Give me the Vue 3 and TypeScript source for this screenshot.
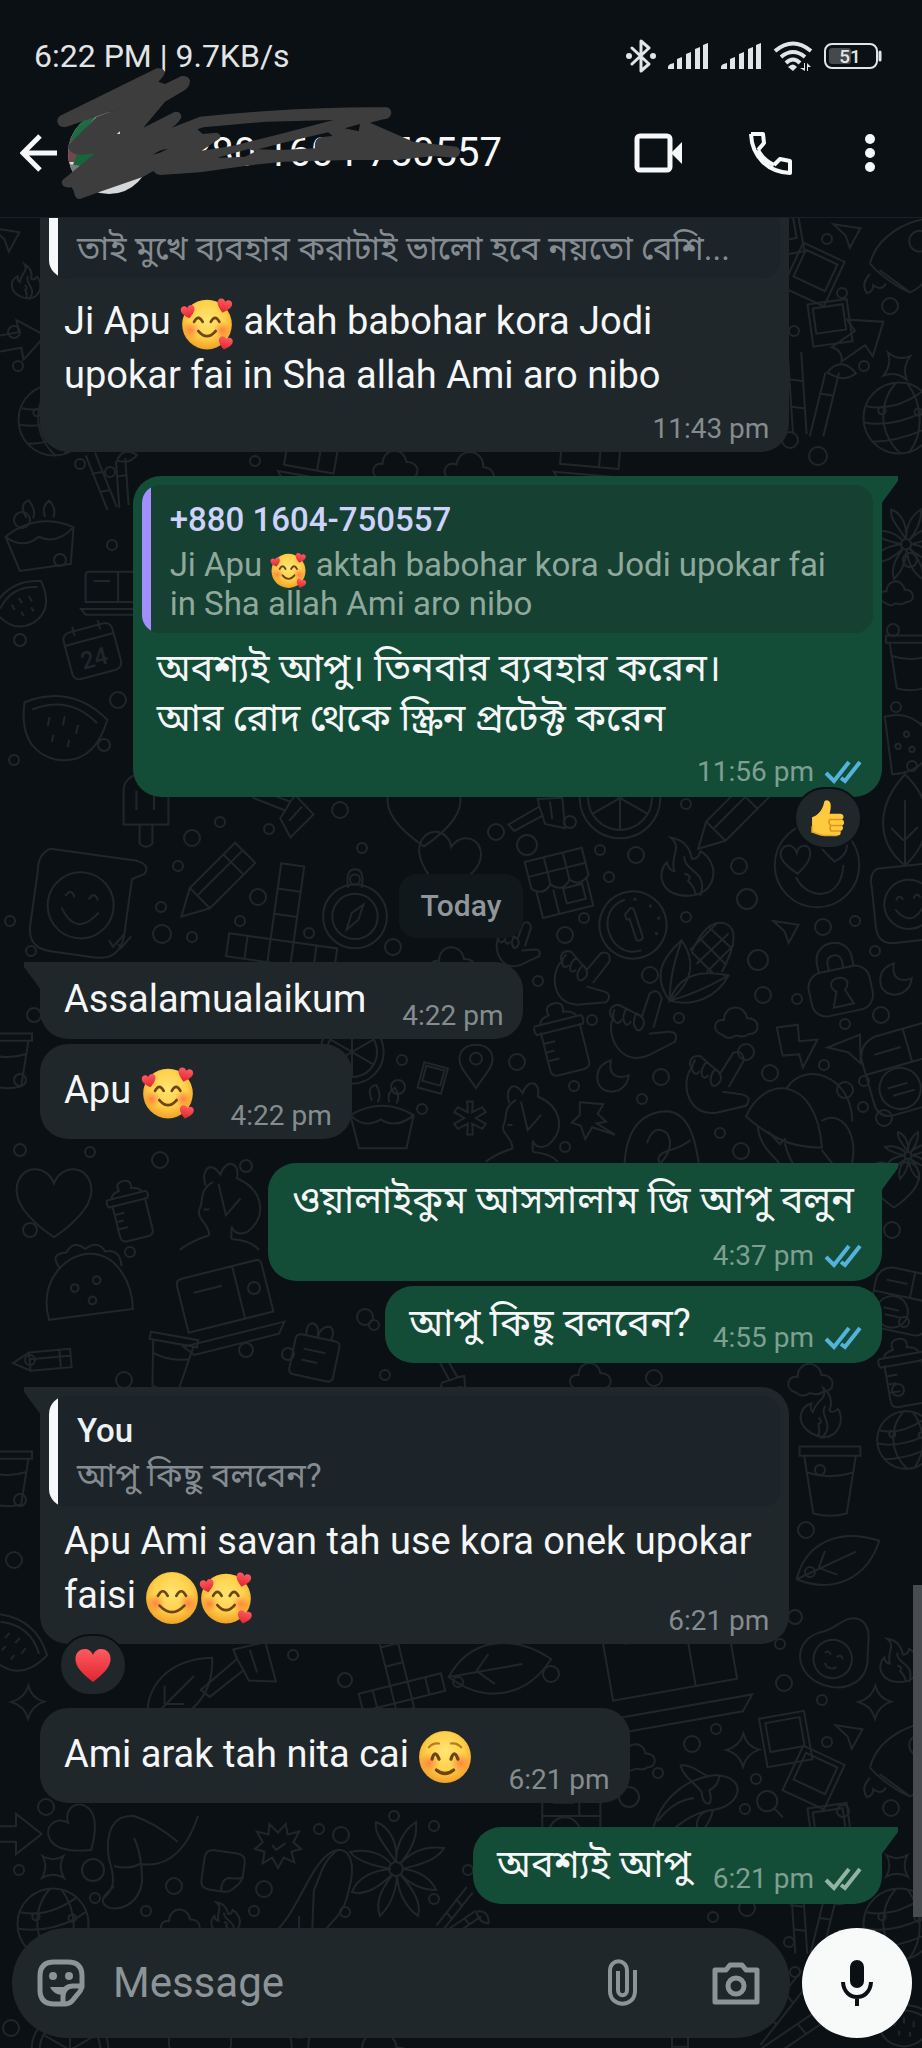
<script setup lang="ts">
type EmojiName = 'hearts' | 'smile' | 'blush' | 'thumb' | 'heart'
interface Part { text?: string; emoji?: EmojiName }
interface Quote { author?: string; parts: Part[]; tone: 'white' | 'violet' }
interface Message {
  id: number
  out?: boolean
  first?: boolean
  wide?: boolean
  stacked?: boolean
  roomy?: boolean
  cut?: boolean
  tuck?: boolean
  bengali?: boolean
  quote?: Quote
  parts: Part[]
  time: string
  ticks?: 'read' | 'delivered'
  reaction?: EmojiName
  day?: string
}

const messages: Message[] = [
  {
    id: 1, wide: true, stacked: true, cut: true,
    quote: { parts: [{ text: 'তাই মুখে ব্যবহার করাটাই ভালো হবে নয়তো বেশি...' }], tone: 'white' },
    parts: [{ text: 'Ji Apu ' }, { emoji: 'hearts' }, { text: ' aktah babohar kora Jodi ' }, { text: 'upokar fai in Sha allah Ami aro nibo' }],
    time: '11:43 pm',
  },
  {
    id: 2, out: true, first: true, wide: true, stacked: true, bengali: true,
    quote: {
      author: '+880 1604-750557', tone: 'violet',
      parts: [{ text: 'Ji Apu ' }, { emoji: 'hearts' }, { text: ' aktah babohar kora Jodi upokar fai ' }, { text: 'in Sha allah Ami aro nibo' }],
    },
    parts: [{ text: 'অবশ্যই আপু। তিনবার ব্যবহার করেন।\nআর রোদ থেকে স্ক্রিন প্রটেক্ট করেন' }],
    time: '11:56 pm', ticks: 'read', reaction: 'thumb',
  },
  { id: 3, day: 'Today', first: true, parts: [{ text: 'Assalamualaikum' }], time: '4:22 pm' },
  { id: 4, roomy: true, parts: [{ text: 'Apu ' }, { emoji: 'hearts' }], time: '4:22 pm' },
  {
    id: 5, out: true, first: true, stacked: true, bengali: true,
    parts: [{ text: 'ওয়ালাইকুম আসসালাম জি আপু বলুন' }], time: '4:37 pm', ticks: 'read',
  },
  { id: 6, out: true, bengali: true, parts: [{ text: 'আপু কিছু বলবেন?' }], time: '4:55 pm', ticks: 'read' },
  {
    id: 7, first: true, wide: true, stacked: true, tuck: true,
    quote: { author: 'You', parts: [{ text: 'আপু কিছু বলবেন?' }], tone: 'white' },
    parts: [{ text: 'Apu Ami savan tah use kora onek upokar ' }, { text: 'faisi ' }, { emoji: 'smile' }, { emoji: 'hearts' }],
    time: '6:21 pm', reaction: 'heart',
  },
  { id: 8, roomy: true, parts: [{ text: 'Ami arak tah nita cai ' }, { emoji: 'blush' }], time: '6:21 pm' },
  { id: 9, out: true, first: true, bengali: true, parts: [{ text: 'অবশ্যই আপু' }], time: '6:21 pm', ticks: 'delivered' },
]

const emojiLabels: Record<EmojiName, string> = {
  hearts: 'Smiling face with hearts',
  smile: 'Smiling face with smiling eyes',
  blush: 'Smiling face',
  thumb: 'Thumbs up',
  heart: 'Red heart',
}

// Small rings scattered between the wallpaper drawings: x, y, radius.
const rings: number[][] = [
  [527, 845, 10], [600, 850, 5], [636, 855, 8], [609, 877, 5], [739, 866, 8], [747, 899, 10], [584, 918, 5],
  [565, 935, 8], [686, 917, 5], [823, 927, 8], [855, 921, 5], [758, 960, 10], [875, 951, 5], [650, 975, 8],
  [538, 981, 5], [763, 995, 8], [797, 999, 5], [881, 1015, 8], [679, 1018, 5], [592, 1020, 5], [845, 1024, 5],
  [746, 1052, 8], [824, 1065, 5], [661, 1077, 8], [770, 1073, 8], [864, 1081, 5], [845, 1090, 8], [642, 1099, 5],
  [574, 1086, 5], [863, 1107, 5], [884, 1118, 8], [720, 1133, 5], [741, 1151, 8], [565, 1147, 5],
  [827, 239, 5], [890, 306, 8], [794, 331, 5], [842, 293, 5], [864, 366, 5], [790, 440, 8], [818, 456, 9], [14, 332, 6],
  [18, 366, 5], [80, 464, 5], [255, 461, 5], [110, 472, 5], [22, 520, 8], [60, 560, 6], [112, 545, 5], [20, 640, 6],
  [118, 700, 8], [104, 745, 6], [14, 760, 5], [893, 630, 6], [896, 707, 5], [910, 560, 7], [912, 766, 5],
  [220, 822, 5], [269, 829, 5], [192, 838, 8], [340, 810, 8], [496, 832, 8], [570, 822, 6], [686, 804, 5], [362, 848, 5],
  [178, 866, 5], [258, 897, 8], [161, 907, 5], [240, 921, 5], [162, 934, 9], [192, 937, 5], [10, 921, 5], [31, 951, 5],
  [309, 933, 5], [393, 947, 8], [34, 1015, 7], [20, 1080, 6], [402, 1060, 5], [398, 1087, 7], [422, 1109, 5], [517, 1062, 8],
  [20, 1150, 6], [90, 1152, 5], [160, 1160, 8], [246, 1166, 6], [30, 1230, 7], [130, 1252, 5], [254, 1288, 6], [288, 1354, 6],
  [365, 1317, 8], [374, 1325, 5], [246, 1350, 7], [385, 1375, 5], [124, 1380, 8], [30, 1360, 5], [892, 1230, 8], [904, 1322, 5],
  [654, 1378, 8], [810, 1572, 5], [795, 1617, 7], [806, 1530, 8], [820, 1470, 5], [898, 1390, 6], [20, 1500, 6], [14, 1560, 8],
  [293, 1655, 5], [345, 1680, 7], [458, 1682, 5], [551, 1674, 8], [780, 1644, 5], [784, 1683, 8], [822, 1700, 5], [716, 1729, 5],
  [692, 1744, 8], [658, 1773, 5], [756, 1779, 5], [629, 1797, 10], [745, 1809, 5], [827, 1742, 5], [843, 1811, 6], [891, 1808, 8],
  [46, 1807, 8], [319, 1829, 5], [341, 1835, 8], [394, 1816, 5], [434, 1826, 5], [468, 1870, 5], [434, 1899, 5], [93, 1870, 11],
  [174, 1886, 8], [264, 1889, 8], [345, 1912, 5], [254, 1911, 5], [146, 1911, 5], [95, 1898, 5], [19, 1870, 5], [11, 2028, 8],
  [713, 1917, 5], [747, 1908, 8], [789, 1942, 5], [795, 1972, 5],
]

// Wallpaper drawings: symbol, centre x, centre y, size, rotation.
interface Doodle { kind: string; x: number; y: number; size: number; turn: number }
const doodles: Doodle[] = [
  { kind: 'arrowhead', x: 847, y: 236, size: 28, turn: 0 },
  { kind: 'photo', x: 780, y: 230, size: 60, turn: -10 },
  { kind: 'photo', x: 816, y: 275, size: 60, turn: 25 },
  { kind: 'photo', x: 832, y: 322, size: 52, turn: -8 },
  { kind: 'rocket', x: 902, y: 254, size: 80, turn: 0 },
  { kind: 'arrow', x: 860, y: 338, size: 62, turn: -35 },
  { kind: 'star', x: 897, y: 366, size: 28, turn: 10 },
  { kind: 'bamboo', x: 812, y: 396, size: 84, turn: 8 },
  { kind: 'globe', x: 899, y: 418, size: 74, turn: 0 },
  { kind: 'arrow', x: 20, y: 340, size: 56, turn: -10 },
  { kind: 'arrowhead', x: 6, y: 240, size: 28, turn: 0 },
  { kind: 'flame', x: 28, y: 282, size: 34, turn: 20 },
  { kind: 'globe', x: 54, y: 420, size: 74, turn: 0 },
  { kind: 'bamboo', x: 112, y: 480, size: 60, turn: -10 },
  { kind: 'cake', x: 40, y: 535, size: 78, turn: -8 },
  { kind: 'laptop', x: 310, y: 462, size: 60, turn: 10 },
  { kind: 'laptop', x: 590, y: 458, size: 70, turn: 5 },
  { kind: 'cloud', x: 395, y: 465, size: 48, turn: 0 },
  { kind: 'cloud', x: 470, y: 468, size: 54, turn: 10 },
  { kind: 'calendar', x: 92, y: 650, size: 60, turn: -15 },
  { kind: 'melon', x: 64, y: 720, size: 92, turn: 12 },
  { kind: 'melon', x: 20, y: 600, size: 60, turn: -30 },
  { kind: 'laptop', x: 110, y: 595, size: 58, turn: 0 },
  { kind: 'flower', x: 906, y: 545, size: 74, turn: 0 },
  { kind: 'cloud', x: 896, y: 592, size: 36, turn: 0 },
  { kind: 'cup', x: 910, y: 662, size: 60, turn: 0 },
  { kind: 'taco', x: 908, y: 742, size: 66, turn: 80 },
  { kind: 'popsicle', x: 146, y: 810, size: 80, turn: 0 },
  { kind: 'brush', x: 284, y: 808, size: 64, turn: 0 },
  { kind: 'heart', x: 424, y: 812, size: 82, turn: 0 },
  { kind: 'brush', x: 540, y: 815, size: 60, turn: -50 },
  { kind: 'wheel', x: 620, y: 798, size: 84, turn: 0 },
  { kind: 'pencil', x: 735, y: 812, size: 80, turn: 0 },
  { kind: 'leaf', x: 905, y: 820, size: 70, turn: -45 },
  { kind: 'chocolate', x: 560, y: 882, size: 70, turn: -14 },
  { kind: 'flame', x: 688, y: 866, size: 62, turn: 0 },
  { kind: 'lovesmile', x: 817, y: 865, size: 88, turn: 0 },
  { kind: 'bubblesmile', x: 914, y: 902, size: 88, turn: -6 },
  { kind: 'clock', x: 633, y: 925, size: 70, turn: -18 },
  { kind: 'corn', x: 700, y: 962, size: 84, turn: 0 },
  { kind: 'arrowhead', x: 786, y: 932, size: 26, turn: 0 },
  { kind: 'lock', x: 838, y: 978, size: 74, turn: -12 },
  { kind: 'moon', x: 896, y: 979, size: 34, turn: 0 },
  { kind: 'hand', x: 582, y: 977, size: 60, turn: 0 },
  { kind: 'hand', x: 640, y: 1026, size: 66, turn: -22 },
  { kind: 'hand', x: 716, y: 1082, size: 66, turn: -8 },
  { kind: 'bottle', x: 562, y: 1038, size: 74, turn: -14 },
  { kind: 'cloud', x: 736, y: 1021, size: 46, turn: 0 },
  { kind: 'bolt', x: 798, y: 1046, size: 46, turn: -8 },
  { kind: 'arrowhead', x: 850, y: 1052, size: 36, turn: -30 },
  { kind: 'jar', x: 902, y: 1070, size: 86, turn: -16 },
  { kind: 'moon', x: 613, y: 1076, size: 34, turn: 0 },
  { kind: 'pin', x: 592, y: 1120, size: 44, turn: -15 },
  { kind: 'girl', x: 526, y: 1120, size: 84, turn: 0 },
  { kind: 'bread', x: 662, y: 1150, size: 84, turn: 0 },
  { kind: 'mushroom', x: 800, y: 1130, size: 116, turn: 14 },
  { kind: 'flower', x: 908, y: 1156, size: 50, turn: 0 },
  { kind: 'pinmark', x: 476, y: 1066, size: 46, turn: 0 },
  { kind: 'photo', x: 434, y: 1078, size: 32, turn: 15 },
  { kind: 'asterisk', x: 470, y: 1118, size: 36, turn: 0 },
  { kind: 'cake', x: 382, y: 1118, size: 72, turn: 0 },
  { kind: 'wheel', x: 352, y: 1052, size: 66, turn: 0 },
  { kind: 'compass', x: 355, y: 908, size: 84, turn: 0 },
  { kind: 'tiles', x: 285, y: 920, size: 116, turn: 8 },
  { kind: 'pencil', x: 220, y: 878, size: 84, turn: 0 },
  { kind: 'bubblesmile', x: 88, y: 904, size: 118, turn: 8 },
  { kind: 'heart', x: 448, y: 862, size: 70, turn: 12 },
  { kind: 'hand', x: 516, y: 945, size: 44, turn: -20 },
  { kind: 'cloud', x: 452, y: 962, size: 50, turn: 0 },
  { kind: 'heart', x: 54, y: 1202, size: 84, turn: 0 },
  { kind: 'cup', x: 8, y: 1060, size: 60, turn: 0 },
  { kind: 'bottle', x: 130, y: 1210, size: 62, turn: -14 },
  { kind: 'girl', x: 224, y: 1204, size: 92, turn: 0 },
  { kind: 'taco', x: 86, y: 1286, size: 96, turn: -10 },
  { kind: 'gift', x: 316, y: 1350, size: 62, turn: 12 },
  { kind: 'laptop', x: 228, y: 1310, size: 104, turn: -14 },
  { kind: 'cup', x: 170, y: 1362, size: 60, turn: 10 },
  { kind: 'pencil', x: 48, y: 1360, size: 54, turn: 40 },
  { kind: 'heart', x: 894, y: 1184, size: 56, turn: 0 },
  { kind: 'jar', x: 900, y: 1300, size: 66, turn: 12 },
  { kind: 'bottle', x: 904, y: 1372, size: 70, turn: -10 },
  { kind: 'cloud', x: 810, y: 1378, size: 48, turn: 0 },
  { kind: 'brush', x: 450, y: 1378, size: 54, turn: 40 },
  { kind: 'cloud', x: 590, y: 1376, size: 44, turn: 0 },
  { kind: 'flame', x: 824, y: 1414, size: 48, turn: 30 },
  { kind: 'cup', x: 830, y: 1480, size: 76, turn: 0 },
  { kind: 'globe', x: 906, y: 1440, size: 60, turn: 0 },
  { kind: 'avocado', x: 836, y: 1650, size: 80, turn: 20 },
  { kind: 'leaf', x: 838, y: 1560, size: 70, turn: 20 },
  { kind: 'flame', x: 900, y: 1660, size: 46, turn: 0 },
  { kind: 'melon', x: 18, y: 1640, size: 70, turn: 40 },
  { kind: 'cup', x: 8, y: 1478, size: 60, turn: 0 },
  { kind: 'leaf', x: 180, y: 1690, size: 70, turn: 0 },
  { kind: 'brush', x: 240, y: 1670, size: 80, turn: -60 },
  { kind: 'tiles', x: 395, y: 1668, size: 90, turn: -14 },
  { kind: 'leaf', x: 500, y: 1668, size: 80, turn: 35 },
  { kind: 'laptop', x: 672, y: 1672, size: 150, turn: -10 },
  { kind: 'star', x: 28, y: 1702, size: 28, turn: 45 },
  { kind: 'star', x: 875, y: 1702, size: 28, turn: 45 },
  { kind: 'star', x: 743, y: 1750, size: 28, turn: 45 },
  { kind: 'photo', x: 788, y: 1738, size: 60, turn: -10 },
  { kind: 'photo', x: 816, y: 1778, size: 60, turn: 25 },
  { kind: 'photo', x: 832, y: 1826, size: 52, turn: -8 },
  { kind: 'arrowhead', x: 849, y: 1737, size: 28, turn: 0 },
  { kind: 'rocket', x: 902, y: 1758, size: 80, turn: 0 },
  { kind: 'whale', x: 694, y: 1800, size: 96, turn: 0 },
  { kind: 'magnifier', x: 770, y: 1804, size: 28, turn: 0 },
  { kind: 'cloud', x: 636, y: 1756, size: 40, turn: 0 },
  { kind: 'jar', x: 570, y: 1820, size: 66, turn: 0 },
  { kind: 'star', x: 897, y: 1866, size: 26, turn: 0 },
  { kind: 'globe', x: 899, y: 1924, size: 74, turn: 0 },
  { kind: 'bamboo', x: 812, y: 1920, size: 74, turn: 8 },
  { kind: 'bamboo', x: 790, y: 2020, size: 84, turn: 50 },
  { kind: 'arrow', x: 16, y: 1834, size: 56, turn: 0 },
  { kind: 'heart', x: 76, y: 1832, size: 56, turn: -40 },
  { kind: 'star', x: 53, y: 1867, size: 26, turn: 0 },
  { kind: 'sock', x: 150, y: 1862, size: 100, turn: 0 },
  { kind: 'burst', x: 278, y: 1846, size: 48, turn: 0 },
  { kind: 'sticker', x: 223, y: 1872, size: 44, turn: 8 },
  { kind: 'spoon', x: 312, y: 1892, size: 92, turn: 0 },
  { kind: 'flower', x: 396, y: 1870, size: 100, turn: 0 },
  { kind: 'flame', x: 226, y: 1918, size: 34, turn: 0 },
  { kind: 'cloud', x: 180, y: 1922, size: 42, turn: 0 },
  { kind: 'globe', x: 53, y: 1924, size: 74, turn: 0 },
  { kind: 'bamboo', x: 460, y: 1916, size: 50, turn: 50 },
  { kind: 'wheel', x: 70, y: 2050, size: 80, turn: 0 },
  { kind: 'heart', x: 200, y: 2052, size: 70, turn: 0 },
  { kind: 'cloud', x: 380, y: 2052, size: 70, turn: 0 },
  { kind: 'star', x: 300, y: 2046, size: 28, turn: 0 },
  { kind: 'tiles', x: 680, y: 2050, size: 80, turn: 0 },
  { kind: 'melon', x: 904, y: 2020, size: 60, turn: 0 },
]

const place = (d: Doodle): string =>
  `translate(${d.x} ${d.y}) rotate(${d.turn}) scale(${d.size / 100}) translate(-50 -50)`
</script>

<template>
  <div class="screen">
    <svg class="defs" aria-hidden="true">
      <defs>
        <radialGradient id="face" cx="50%" cy="40%" r="60%">
          <stop offset="0" stop-color="#ffe573" /><stop offset=".6" stop-color="#ffd04a" /><stop offset="1" stop-color="#f2a126" />
        </radialGradient>
        <radialGradient id="cheek"><stop offset="0" stop-color="#ff6a3c" stop-opacity=".75" /><stop offset="1" stop-color="#ff7a3c" stop-opacity="0" /></radialGradient>
        <linearGradient id="red" x1="0" y1="0" x2="0" y2="1"><stop offset="0" stop-color="#ff5a60" /><stop offset="1" stop-color="#e0242f" /></linearGradient>
        <symbol id="small-heart" viewBox="0 0 20 20"><path d="M10 18.500C3 13 .8 9.500 1.600 5.800 2.500 2 8 1.200 10 5.500 12 1.200 17.500 2 18.400 5.800 19.200 9.500 17 13 10 18.500Z" fill="url(#red)" /></symbol>
        <symbol id="emoji-hearts" viewBox="0 0 100 100">
          <circle cx="50" cy="51" r="46" fill="url(#face)" />
          <circle cx="20" cy="61" r="16" fill="url(#cheek)" /><circle cx="78" cy="61" r="16" fill="url(#cheek)" />
          <path d="M26 46q8-15 16 0M57 46q8-15 16 0" fill="none" stroke="#6d4414" stroke-width="5" stroke-linecap="round" />
          <path d="M34 63q16 19 32 0" fill="none" stroke="#6d4414" stroke-width="5" stroke-linecap="round" />
          <use href="#small-heart" x="0" y="12" width="30" height="30" transform="rotate(-12 15 27)" />
          <use href="#small-heart" x="66" y="0" width="32" height="32" transform="rotate(14 82 16)" />
          <use href="#small-heart" x="69" y="70" width="30" height="30" transform="rotate(14 84 85)" />
        </symbol>
        <symbol id="emoji-smile" viewBox="0 0 100 100">
          <circle cx="50" cy="50" r="48" fill="url(#face)" />
          <circle cx="20" cy="60" r="18" fill="url(#cheek)" /><circle cx="80" cy="60" r="18" fill="url(#cheek)" />
          <path d="M24 46q9-17 18 0M58 46q9-17 18 0M27 64q23 24 46 0" fill="none" stroke="#6d4414" stroke-width="5" stroke-linecap="round" />
        </symbol>
        <symbol id="emoji-blush" viewBox="0 0 100 100">
          <circle cx="50" cy="50" r="48" fill="url(#face)" />
          <circle cx="21" cy="61" r="19" fill="url(#cheek)" /><circle cx="79" cy="61" r="19" fill="url(#cheek)" />
          <path d="M20 32q8-9 19-7M61 25q11-2 19 7" fill="none" stroke="#b97b1d" stroke-width="4" stroke-linecap="round" />
          <path d="M26 54q5-20 13 0M61 54q6-20 13 0M34 74q16 13 32 0" fill="none" stroke="#6d4414" stroke-width="6" stroke-linecap="round" />
        </symbol>
        <symbol id="emoji-thumb" viewBox="0 0 100 100">
          <path d="M8 48C22 45 36 30 40 8 41 1 55 0 57 14 58 24 56 32 54 39H82C92 39 94 51 86 54 95 56 94 69 86 70 92 73 90 84 82 84 86 90 82 96 74 96H42C26 96 18 88 8 87Z" fill="#ffca3d" />
          <path d="M55 54H86M57 70H86M58 84H82M55 54q-6 8 2 16-4 8 1 14" fill="none" stroke="#dd941d" stroke-width="4" stroke-linecap="round" />
          <path d="M8 72V87C18 88 26 96 42 96H74" fill="none" stroke="#e9a526" stroke-width="4" />
        </symbol>
        <symbol id="emoji-heart" viewBox="0 0 100 100"><path d="M50 95C18 70 2 52 4 31 6 6 40-2 50 24 60-2 94 6 96 31 98 52 82 70 50 95Z" fill="url(#red)" /></symbol>

        <g id="d-arrowhead"><path d="M2 8 98 22 60 92 45 48Z" /></g>
        <g id="d-photo"><path d="M8 10H84V92H8ZM17 19H75V68H17Z" /></g>
        <g id="d-rocket"><path d="M10 62C18 30 52 6 98 4M10 62C20 74 44 92 60 98 76 92 92 70 98 50M22 70 60 98" /><circle cx="72" cy="34" r="13" /><path d="M10 75q-12 12-4 24 8-2 8-10 10 8 16-2" /></g>
        <g id="d-arrow"><path d="M4 36H50V14L96 50 50 86V64H4Q16 50 4 36Z" /></g>
        <g id="d-star"><path d="M10 8Q50 32 90 8 68 50 92 92 50 68 8 92 32 50 10 8Z" /></g>
        <g id="d-bamboo"><path d="M14 2 34 98M30 0 50 96M18 34H38M26 66H44M62 20 54 98M78 18 70 96M60 46H76M64 20C74 2 88 6 98 16 86 28 76 24 64 20" /></g>
        <g id="d-globe"><circle cx="50" cy="50" r="48" /><path d="M46 2C22 30 22 70 52 98M62 4C82 32 84 70 64 96M6 34C34 40 60 30 82 14M2 56C34 62 70 52 94 34M14 82C44 82 72 72 96 60" /><circle cx="27" cy="40" r="5" /><circle cx="76" cy="42" r="5" /></g>
        <g id="d-flame"><path d="M22 4C48 8 54 26 56 38 66 40 68 32 70 26 104 46 96 98 50 98 6 98-2 62 16 44 18 54 24 58 28 58 20 34 42 20 22 4ZM44 34C42 60 84 56 70 98M44 62q14 4 6 12 12 12 12 22" /></g>
        <g id="d-cake"><path d="M6 46Q50 20 94 46L84 92H18ZM6 46Q26 66 48 52 70 66 94 46M36 26q-8-20 6-22 8 14 2 24M60 28q-4-14 8-20 8 12 2 22" /></g>
        <g id="d-laptop"><path d="M14 10H88Q92 10 92 16V62H8V16Q8 10 14 10ZM0 74H100L92 84H8ZM22 26H50M64 10V62" /></g>
        <g id="d-cloud"><path d="M20 80C-4 72 2 44 24 48 24 14 68 10 74 44 104 42 104 80 78 78 66 90 54 80 48 82 38 90 26 86 20 80Z" /></g>
        <g id="d-calendar"><rect x="8" y="12" width="84" height="80" rx="12" /><path d="M8 32H92M28 4V20M72 4V20" /><text x="50" y="78" text-anchor="middle">24</text></g>
        <g id="d-melon"><path d="M4 40Q50 10 96 40 92 92 50 94 8 92 4 40ZM14 46Q50 22 86 46M34 50v10M50 46v10M66 52v10M42 68v8M60 70v8" /></g>
        <g id="d-flower"><path d="M50 42C38 24 28 14 30 2 46 8 52 26 50 42C50 24 58 10 70 2 72 20 62 34 54 44C68 28 84 26 98 28 90 42 68 46 56 49C74 50 86 60 90 70 72 70 60 60 54 54C66 68 76 82 72 96 58 86 52 70 51 56C50 74 42 88 34 96 28 80 38 66 47 54C34 66 20 76 6 72 12 56 30 50 45 49C30 46 12 42 4 32 22 28 38 34 46 45" /><circle cx="50" cy="49" r="7" /></g>
        <g id="d-cup"><path d="M16 18H84L72 94Q50 100 28 94ZM10 6H90V18H10ZM20 40Q50 50 80 40" /></g>
        <g id="d-taco"><path d="M6 78C2 34 38 12 62 18 88 24 98 56 94 82ZM26 26q-8-16 10-14 10-12 20 0 14-8 20 6 16 0 14 18" /><circle cx="38" cy="50" r="4" /><circle cx="62" cy="46" r="4" /><circle cx="54" cy="66" r="4" /></g>
        <g id="d-popsicle"><path d="M22 68V26C22-4 78-4 78 26V68ZM42 68V92Q50 100 58 92V68M38 26V50M60 26V50" /></g>
        <g id="d-brush"><path d="M4 20 60 40 68 30 96 60 60 96 44 66 52 54 2 34ZM60 40 52 54M78 48 58 70" /></g>
        <g id="d-heart"><path d="M50 92C18 70 2 50 6 30 12 4 42 6 50 28 58 6 88 4 94 30 98 50 82 70 50 92Z" /></g>
        <g id="d-wheel"><circle cx="50" cy="50" r="48" /><circle cx="50" cy="50" r="38" /><path d="M50 12V88M17 31 83 69M17 69 83 31" /></g>
        <g id="d-pencil"><path d="M4 96 14 62 68 8 92 32 38 86ZM14 62 38 86M54 22 78 46M24 70 76 18" /></g>
        <g id="d-leaf"><path d="M4 96C-2 44 34 6 96 4 98 60 62 98 4 96ZM4 96 70 30M28 70V44M30 70H56" /></g>
        <g id="d-chocolate"><path d="M8 10H92V50Q76 64 64 50 50 66 36 50 22 64 8 50ZM8 32H92M36 10V50M64 10V50M14 56V94H88V54M38 58V94M52 60h28v22H52Z" /></g>
        <g id="d-lovesmile"><circle cx="50" cy="50" r="48" /><path d="M28 60C10 48 4 38 12 30 20 24 26 32 27 36 30 26 40 26 42 34 44 44 36 52 28 60ZM70 46C56 34 48 24 58 18 66 14 70 22 71 26 76 18 84 20 84 28 84 36 78 42 70 46ZM26 64C40 92 78 90 80 50" /></g>
        <g id="d-bubblesmile"><path d="M12 8H86Q98 10 94 18L84 24V74Q82 94 62 94H24Q4 94 4 74V28Q2 14 12 8Z" /><circle cx="44" cy="52" r="28" /><path d="M30 46q4-8 8 0M50 46q4-8 8 0M28 56q16 24 32 0M72 78l4 5 8-12M80 80l3 3 7-11" /></g>
        <g id="d-clock"><circle cx="50" cy="50" r="48" /><path d="M50 12C2 12 2 88 50 88M44 32 54 26Q58 26 58 30V72Q52 76 48 72V40Q42 42 44 32Z" /><circle cx="64" cy="16" r="1" /><circle cx="82" cy="32" r="1" /><circle cx="88" cy="52" r="1" /><circle cx="78" cy="72" r="1" /></g>
        <g id="d-corn"><path d="M14 96C-8 66 6 44 28 24 42 44 46 70 14 96C26 62 54 60 84 66 70 92 42 104 14 96ZM14 96C14 66 20 50 28 24M14 96Q46 88 84 66M40 38C52 12 64 0 80 4 94 10 94 28 76 62M40 38 66 64M50 22 80 52M60 8 88 34M84 16 46 52M70 4 38 36M90 30 58 62" /></g>
        <g id="d-lock"><rect x="8" y="38" width="84" height="60" rx="20" /><path d="M26 38V26C26-6 74-6 74 26V38M40 38V28C40 16 60 16 60 28V38M44 68 36 88H64L56 68C66 58 60 50 50 50 40 50 34 58 44 68Z" /></g>
        <g id="d-moon"><path d="M44 4C36 42 56 62 96 48 90 112-2 112 4 48 6 26 22 10 44 4Z" /></g>
        <g id="d-hand"><path d="M68 60 96 24Q98 6 82 10L58 38 32 8C20 4 12 12 16 24-4 44 0 98 46 96L90 92Q102 80 86 74L58 66M24 12C10 26 20 40 28 30M40 18C24 32 30 48 40 38M52 30C36 44 42 64 54 52 62 46 58 36 52 30" /></g>
        <g id="d-bottle"><path d="M24 36V88Q24 98 34 98H68Q78 98 78 88V36M18 26H82Q86 32 82 38H18Q14 32 18 26ZM26 26Q26 18 40 16 36 2 50 2 64 2 60 16 74 18 76 26M24 52H40M24 64H36M24 76H40" /></g>
        <g id="d-bolt"><path d="M10 4H56L54 40 94 42 54 98 50 68 14 66Z" /></g>
        <g id="d-jar"><path d="M30 4H86Q98 6 96 20V86Q94 98 80 98H28Q8 98 8 78V26Q10 8 30 4ZM8 44H96M24 24H56M64 4V44" /><circle cx="42" cy="70" r="24" /><path d="M28 66H52M32 76H58" /></g>
        <g id="d-pin"><path d="M34 4 84 22 66 40 80 62 58 60 92 96 46 66 24 88 22 56 4 44 26 32Z" /></g>
        <g id="d-girl"><path d="M30 30C24 12 36 2 46 18 52 0 68 4 64 22 92 34 98 62 76 80 68 84 60 82 58 74M38 26C22 36 28 46 24 54 18 66 34 70 34 84M58 76V88M34 84C14 90 4 98 2 100M58 88C82 90 86 98 88 100M44 28 52 62 68 44M28 56H34" /></g>
        <g id="d-bread"><path d="M6 98C0 30 22 6 54 4 84 4 92 40 98 98M32 42Q40 18 56 30 66 46 48 66 40 56 60 50 74 46 84 38" /></g>
        <g id="d-mushroom"><path d="M2 50C8 12 52 0 72 60 44 68 22 60 2 50ZM30 18C40-10 82-6 92 32M66 38C84 20 108 52 98 82L72 62M14 56C22 78 40 76 56 98M40 64Q52 88 80 96M24 58 36 66 40 60" /></g>
        <g id="d-pinmark"><path d="M50 98C28 66 14 52 14 34 14-6 86-6 86 34 86 52 72 66 50 98Z" /><circle cx="50" cy="34" r="13" /></g>
        <g id="d-asterisk"><path d="M42 4H58L56 34 84 20 94 34 66 50 94 66 84 80 56 66 58 96H42L44 66 16 80 6 66 34 50 6 34 16 20 44 34Z" /></g>
        <g id="d-compass"><circle cx="50" cy="60" r="38" /><circle cx="50" cy="60" r="27" /><circle cx="50" cy="16" r="6" /><path d="M42 26Q38 4 50 4 62 4 58 26M60 46 54 64 40 76 46 56Z" /></g>
        <g id="d-tiles"><path d="M40 2H60V98H40ZM4 68H98V88H4ZM20 68V88M80 68V88M40 24H60M40 46H60" /></g>
        <g id="d-gift"><rect x="14" y="30" width="72" height="66" rx="8" /><path d="M30 30C22 2 50 2 48 30 50 2 78 2 70 30M30 52H66M30 70H56" /></g>
        <g id="d-avocado"><path d="M66 4C84 8 84 30 92 50 100 84 66 100 42 96 6 90-2 54 24 36 42 26 46 2 66 4Z" /><circle cx="50" cy="62" r="24" /><path d="M38 58q4-6 8 0M54 58q4-6 8 0M42 70q8 8 16 0" /></g>
        <g id="d-whale"><path d="M4 96C10 50 40 28 72 24 108 26 98 56 72 60 52 62 26 76 16 98M66 26C54 20 44 12 36 14 40 28 50 30 58 42 58 56 72 60 66 40 76 34 76 28 76 24M62 62Q50 68 54 82 64 82 70 60M12 72C26 54 38 50 50 48" /></g>
        <g id="d-magnifier"><circle cx="40" cy="40" r="36" /><path d="M66 66 96 98" /></g>
        <g id="d-sock"><path d="M4 86C14 76 14 70 12 58 4 34 6 2 34 4 52 10 66 20 78 30M34 26C42 42 42 60 42 70 38 96 14 100 6 94-2 88 6 82 14 74M14 54Q28 58 40 52 80 58 98 4" /></g>
        <g id="d-burst"><path d="M50 22 66 4 70 26 94 20 82 42 98 56 78 62 84 84 62 74 50 96 38 74 18 86 22 62 2 56 18 42 6 20 30 26 32 4ZM38 48 46 58 66 44" /></g>
        <g id="d-sticker"><path d="M24 4H76Q96 4 96 24V56Q94 70 74 88 68 94 58 94H24Q4 94 4 74V24Q4 4 24 4ZM52 94Q48 68 64 62 84 62 96 56" /></g>
        <g id="d-spoon"><path d="M4 98C34 78 46 20 72 6 92-2 98 20 90 48 84 78 70 80 60 98M78 4C60 18 60 32 52 48L50 98M36 98V76" /></g>
      </defs>
    </svg>

    <header class="top">
      <div class="status">
        <span>6:22 PM | 9.7KB/s</span>
        <div class="status-icons">
          <svg class="bt" viewBox="0 0 30 34" aria-label="Bluetooth"><path d="M6 9 23 25 15 32V2L23 9 6 25" fill="none" stroke="currentColor" stroke-width="3" stroke-linejoin="round" stroke-linecap="round" /><circle cx="3" cy="17" r="3" fill="currentColor" /><circle cx="27" cy="17" r="3" fill="currentColor" /></svg>
          <svg v-for="n in 2" :key="n" class="signal" viewBox="0 0 42 26" aria-label="Signal"><path d="M1 24q0-3 6-4v6H1ZM10 16l5-2v12h-5ZM19 11l5-2v17h-5ZM28 6l5-2v22h-5ZM36 2l5-2v26h-5Z" fill="currentColor" /></svg>
          <svg class="wifi" viewBox="0 0 40 30" aria-label="Wi-Fi"><path d="M2 10Q20-5 38 10M8 16Q20 6 32 16M13 22Q20 15 27 22" fill="none" stroke="currentColor" stroke-width="4" /><path d="M15 26q5-5 9 0l-4 4ZM27 27h4v-5l1 0v8ZM34 30v-8l4 4h-3v4Z" fill="currentColor" /></svg>
          <svg class="battery" viewBox="0 0 59 26" aria-label="Battery 51 percent"><rect x="1" y="1" width="52" height="24" rx="7" fill="none" stroke="currentColor" stroke-width="2" /><rect x="5" y="5" width="22" height="16" rx="3" fill="#46494c" /><path d="M56 9v8" stroke="currentColor" stroke-width="3" stroke-linecap="round" /><text x="26" y="20" text-anchor="middle" class="battery-text">51</text></svg>
        </div>
      </div>
      <div class="bar">
        <button class="icon-button back" aria-label="Back"><svg viewBox="0 0 38 38"><path d="M37 19H3M20 2 3 19 20 36" fill="none" stroke="currentColor" stroke-width="5" /></svg></button>
        <svg class="avatar" viewBox="0 0 82 82" role="img" aria-label="Profile photo"><clipPath id="round"><circle cx="41" cy="41" r="41" /></clipPath><g clip-path="url(#round)"><path d="M0 0H82V82H0Z" fill="#d5d7d8" /><path d="M0 0H32L20 14 8 30 0 34Z" fill="#1f6a43" /><path d="M0 28H14L10 50H0Z" fill="#70474a" /><path d="M10 38H30L18 56H4Z" fill="#17663a" /><path d="M0 52 14 54V76H0Z" fill="#777c7c" /></g></svg>
        <h1>+880 1604-750557</h1>
        <button class="icon-button video" aria-label="Video call"><svg viewBox="0 0 48 40"><rect x="3" y="3" width="33" height="34" rx="3" fill="none" stroke="currentColor" stroke-width="5" /><path d="M37 20 48 9V31Z" fill="currentColor" /></svg></button>
        <button class="icon-button call" aria-label="Voice call"><svg viewBox="0 0 43 43"><path d="M2 2H14L15 11 9 18M2 2C3 25 19 40 41 41V29L31 27 25 33M9 18Q14 28 25 33" fill="none" stroke="currentColor" stroke-width="4" stroke-linejoin="round" /></svg></button>
        <button class="icon-button more" aria-label="More options"><svg viewBox="0 0 12 40"><circle cx="6" cy="6" r="5" fill="currentColor" /><circle cx="6" cy="20" r="5" fill="currentColor" /><circle cx="6" cy="34" r="5" fill="currentColor" /></svg></button>
      </div>
      <svg class="scribble" viewBox="0 0 1380 660" aria-hidden="true">
        <path fill-rule="evenodd" d="M172 365Q172 350 185 345L470 205Q490 202 494 215 496 226 475 245L495 252 545 228Q566 226 570 242 570 258 555 270L495 305 470 335 430 383 525 335Q543 334 544 350 540 366 515 383L600 350Q700 340 800 333 1000 320 1160 322 1174 326 1174 340 1170 358 1150 358L1110 368 1240 425 1370 440Q1381 445 1380 457 1378 470 1365 473L1300 468 1190 480 1050 480 850 485 740 497 600 517 480 525Q466 522 460 513L430 530 300 575 240 597Q224 597 222 575L215 562Q184 566 185 545 190 535 200 530L285 460 240 465Q205 460 203 438L290 350 375 320 200 380Q176 384 172 365ZM1000 360 800 365 610 382 592 388 608 402 650 398Q668 404 658 416L605 452 700 437 850 400ZM775 448 850 428 985 397 998 408 960 412Q942 418 945 445L840 450ZM650 474 745 447 768 454 735 470ZM458 464Q480 448 504 446L480 458ZM1034 385 1080 372 1076 394ZM350 402l10-8 0 8Z" />
      </svg>
    </header>

    <div class="conversation">
      <svg class="wallpaper" viewBox="0 218 922 1830" preserveAspectRatio="xMidYMin slice" aria-hidden="true">
        <use v-for="(d, i) in doodles" :key="i" :href="'#d-' + d.kind" :transform="place(d)" />
        <circle v-for="(r, i) in rings" :key="'r' + i" :cx="r[0]" :cy="r[1]" :r="r[2]" />
      </svg>

      <main class="messages">
        <template v-for="m in messages" :key="m.id">
          <div v-if="m.day" class="day">{{ m.day }}</div>
          <article
            class="bubble"
            :class="{ out: m.out, first: m.first, wide: m.wide, stacked: m.stacked, roomy: m.roomy, cut: m.cut, tuck: m.tuck, bengali: m.bengali, reacted: m.reaction }"
          >
            <blockquote v-if="m.quote" class="quote" :class="m.quote.tone">
              <strong v-if="m.quote.author">{{ m.quote.author }}</strong>
              <p><template v-for="(p, i) in m.quote.parts" :key="i"><svg v-if="p.emoji" class="emoji" role="img" :aria-label="emojiLabels[p.emoji]"><use :href="'#emoji-' + p.emoji" /></svg><template v-else>{{ p.text }}</template></template></p>
            </blockquote>
            <div class="body">
              <p class="text"><template v-for="(p, i) in m.parts" :key="i"><svg v-if="p.emoji" class="emoji" role="img" :aria-label="emojiLabels[p.emoji]"><use :href="'#emoji-' + p.emoji" /></svg><template v-else>{{ p.text }}</template></template></p>
              <div class="meta">
                <time>{{ m.time }}</time>
                <svg v-if="m.ticks" class="ticks" :class="m.ticks" viewBox="0 0 38 24" role="img" :aria-label="m.ticks"><path d="M2 13 10 21 25 2M17 18 21 21 36 2" fill="none" stroke="currentColor" stroke-width="4" /></svg>
              </div>
            </div>
            <button v-if="m.reaction" class="reaction" :aria-label="emojiLabels[m.reaction]"><svg><use :href="'#emoji-' + m.reaction" /></svg></button>
          </article>
        </template>
      </main>

      <form class="composer" @submit.prevent>
        <div class="field">
          <button type="button" class="icon-button sticker" aria-label="Stickers"><svg viewBox="0 0 48 48"><path d="M17 3H31Q45 3 45 17V28Q44 32 40 36L35 42Q32 45 28 45H17Q3 45 3 31V17Q3 3 17 3ZM26 45V37Q27 27 36 27H45" fill="none" stroke="currentColor" stroke-width="5" /><circle cx="16" cy="17" r="4" fill="currentColor" /><circle cx="32" cy="17" r="4" fill="currentColor" /><path d="M13 28H33L25 36Q16 35 13 28Z" fill="currentColor" /></svg></button>
          <input type="text" placeholder="Message" aria-label="Message" />
          <button type="button" class="icon-button clip" aria-label="Attach"><svg viewBox="0 0 31 48"><path d="M28 11V32C28 49 3 49 3 32V12C3-1 20-1 20 12V31C20 38 11 38 11 31V12" fill="none" stroke="currentColor" stroke-width="4" /></svg></button>
          <button type="button" class="icon-button camera" aria-label="Camera"><svg viewBox="0 0 48 43"><path d="M3 8H14L18 3H30L34 8H45V40H3Z" fill="none" stroke="currentColor" stroke-width="5" stroke-linejoin="round" /><circle cx="24" cy="24" r="8" fill="none" stroke="currentColor" stroke-width="5" /></svg></button>
        </div>
        <button type="button" class="mic" aria-label="Voice message"><svg viewBox="0 0 34 46"><rect x="10" y="0" width="14" height="28" rx="7" fill="currentColor" /><path d="M3 22C4 42 30 42 31 22M17 37V46" fill="none" stroke="currentColor" stroke-width="4" /></svg></button>
      </form>
      <div class="scroll-thumb"></div>
    </div>
  </div>
</template>

<style>
body { background: #0b1014; }
</style>

<style scoped>
.screen {
  min-height: 100vh;
  display: flex;
  flex-direction: column;
  background: #0b1014;
  color: #f4f6f7;
  font-family: Roboto, "Noto Sans Bengali", "Noto Sans", sans-serif;
}
.defs { position: absolute; width: 0; height: 0; }
p, h1, blockquote { margin: 0; }
button { border: 0; padding: 0; font: inherit; cursor: pointer; }
.icon-button { background: none; color: inherit; flex: none; }
.icon-button svg, .mic svg { display: block; width: 100%; height: 100%; }

.top { position: relative; height: 218px; box-sizing: border-box; border-bottom: 1px solid #1a2025; }
.status { display: flex; justify-content: space-between; align-items: center; padding: 36px 39px 0 34px; height: 40px; font-size: 32px; line-height: 40px; color: #e2e5e7; }
.status-icons { display: flex; align-items: center; gap: 11px; }
.status-icons svg { flex: none; }
.bt { width: 30px; height: 34px; }
.signal { width: 42px; height: 26px; }
.wifi { width: 40px; height: 30px; }
.battery { width: 59px; height: 26px; }
.battery-text { font: 500 19px Roboto, sans-serif; fill: #e2e5e7; }
.bar { display: flex; align-items: center; padding: 36px 46px 0 20px; height: 82px; color: #f7f8f9; }
.back { width: 38px; height: 38px; }
.avatar { flex: none; width: 82px; height: 82px; margin-left: 10px; }
.bar h1 { flex: 1; margin-left: 16px; font-size: 40px; line-height: 48px; font-weight: 400; white-space: nowrap; }
.video { width: 48px; height: 40px; }
.call { width: 43px; height: 43px; margin-left: 67px; }
.more { width: 12px; height: 40px; margin-left: 72px; }
.scribble { position: absolute; left: 0; top: 0; width: 460px; height: 220px; fill: #3d3d3d; pointer-events: none; }

.conversation { position: relative; flex: 1; display: flex; flex-direction: column; overflow: hidden; }
.wallpaper { position: absolute; inset: 0; width: 100%; height: 100%; fill: none; stroke: #20272b; stroke-width: 2px; }
.wallpaper > * { vector-effect: non-scaling-stroke; }
.defs g path, .defs g circle, .defs g rect { vector-effect: non-scaling-stroke; }
.defs g text { font: 500 40px Roboto, sans-serif; fill: #20272b; stroke: none; }

.messages { position: relative; flex: 1; display: flex; flex-direction: column; align-items: flex-start; padding: 0 40px; }
.bubble { position: relative; box-sizing: border-box; max-width: 89%; margin-top: 5px; border-radius: 28px; background: #1f272a; }
.bubble.out { align-self: flex-end; background: #144d37; }
.bubble.wide { width: 89%; }
.bubble.cut { margin-top: 0; border-top-left-radius: 0; border-top-right-radius: 0; }
.bubble.first { margin-top: 24px; border-top-left-radius: 0; }
.bubble.reacted + .bubble { margin-top: 64px; }
.bubble.out.first { border-top-left-radius: 28px; border-top-right-radius: 0; }
.bubble.first::before { content: ""; position: absolute; top: 0; left: -16px; width: 17px; height: 28px; background: inherit; clip-path: polygon(0 0, 100% 0, 100% 100%, 0 5px); }
.bubble.out.first::before { left: auto; right: -16px; clip-path: polygon(0 0, 100% 0, 100% 5px, 0 100%); }

.quote { position: relative; overflow: hidden; margin: 0 9px; padding: 15px 28px 10px 28px; border-radius: 18px; background: #1c2329; color: #858c91; font-size: 33px; line-height: 39px; }
.wide { padding-top: 9px; }
.wide.cut { padding-top: 0; }
.cut .quote { padding-top: 11px; border-top-left-radius: 0; border-top-right-radius: 0; }
.quote::before { content: ""; position: absolute; left: 0; top: 0; bottom: 0; width: 9px; background: #f7f8f9; }
.quote strong { display: block; margin-bottom: 5px; font-size: 33px; line-height: 40px; font-weight: 500; color: #eef1f2; }
.quote.violet { background: #164032; color: #8fa99d; }
.quote.violet::before { background: #a18ffb; }
.quote.violet strong { color: #cfd3fb; }
.cut .quote p { white-space: nowrap; }

.body { display: flex; align-items: flex-end; gap: 36px; padding: 10px 20px 6px 24px; }
.out .body { gap: 22px; padding-bottom: 8px; }
.text { white-space: pre-line; font-size: 38px; line-height: 54px; padding-bottom: 7px; }
.out .text { padding-bottom: 5px; }
.roomy .body { padding-top: 19px; }
.roomy .text { padding-bottom: 16px; }
.stacked .body { flex-direction: column; align-items: stretch; gap: 12px; }
.stacked .text { padding-right: 8px; padding-bottom: 0; }
.cut .body { padding-top: 16px; gap: 10px; }
.bengali.wide .text { line-height: 50px; }
.tuck .quote { padding-bottom: 12px; }
.tuck .body { padding-top: 7px; gap: 0; }
.tuck .meta { margin-top: -18px; }
.emoji { display: inline-block; width: 54px; height: 54px; margin: -6px 0; vertical-align: -11px; }
.quote .emoji { width: 37px; height: 37px; vertical-align: -7px; }
.meta { display: flex; justify-content: flex-end; align-items: center; gap: 10px; flex: none; font-size: 28px; line-height: 34px; color: #858c90; white-space: nowrap; }
.out .meta { color: #7f9f92; }
.ticks { width: 38px; height: 24px; flex: none; color: #53b3dc; }
.ticks.delivered { color: #93b3a5; }

.reaction { position: absolute; right: 20px; top: calc(100% - 10px); width: 68px; height: 62px; border-radius: 31px; border: 2px solid #0b1014; background: #1f272a; display: grid; place-items: center; }
.bubble:not(.out) .reaction { right: auto; left: 19px; }
.reaction svg { width: 38px; height: 38px; }
.day { align-self: center; margin-top: 77px; padding: 12px 22px; border-radius: 18px; background: #11181c; color: #90979b; font-size: 30px; line-height: 40px; font-weight: 500; }

.composer { position: relative; display: flex; gap: 12px; padding: 20px 10px 10px 12px; }
.field { flex: 1; min-width: 0; display: flex; align-items: center; box-sizing: border-box; height: 110px; padding: 0 30px 0 25px; border-radius: 55px; background: #1f272a; color: #8c9498; }
.sticker { width: 48px; height: 48px; }
.field input { flex: 1; min-width: 0; margin-left: 28px; padding: 0; border: 0; outline: 0; background: none; color: #f4f6f7; font: 400 42px/52px Roboto, sans-serif; }
.field input::placeholder { color: #8c9498; opacity: 1; }
.clip { width: 31px; height: 48px; margin-right: 74px; }
.camera { width: 48px; height: 43px; }
.mic { flex: none; width: 110px; height: 110px; border-radius: 50%; background: #f8f9f9; color: #0b1014; display: grid; place-items: center; }
.mic svg { width: 34px; height: 46px; }
.scroll-thumb { position: absolute; right: 0; bottom: 131px; width: 9px; height: 332px; background: #484c50; }
</style>
